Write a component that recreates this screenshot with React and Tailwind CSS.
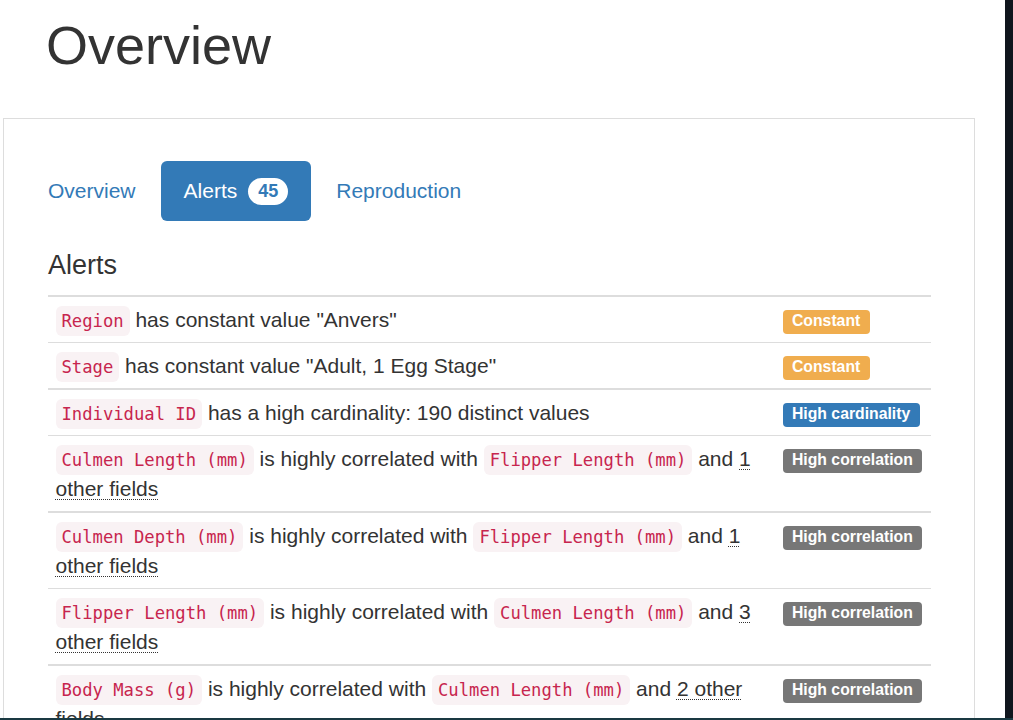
import React from 'react';

const alerts = [
  { col: 'Region', text: 'has constant value "Anvers"', type: 'Constant' },
  { col: 'Stage', text: 'has constant value "Adult, 1 Egg Stage"', type: 'Constant' },
  { col: 'Individual ID', text: 'has a high cardinality: 190 distinct values', type: 'High cardinality' },
  { col: 'Culmen Length (mm)', other: 'Flipper Length (mm)', n: 1, type: 'High correlation' },
  { col: 'Culmen Depth (mm)', other: 'Flipper Length (mm)', n: 1, type: 'High correlation' },
  { col: 'Flipper Length (mm)', other: 'Culmen Length (mm)', n: 3, type: 'High correlation' },
  { col: 'Body Mass (g)', other: 'Culmen Length (mm)', n: 2, type: 'High correlation' },
];

const labelColor = {
  Constant: 'bg-[#f0ad4e]',
  'High cardinality': 'bg-[#337ab7]',
  'High correlation': 'bg-[#777777]',
};

const Code = ({ children }) => (
  <code className="whitespace-nowrap rounded-[6px] bg-[#f9f2f4] px-[6px] py-[5px] font-['DejaVu_Sans_Mono',monospace] text-[17.2px] leading-none text-[#c7254e]">
    {children}
  </code>
);

const AlertRow = ({ alert, thick }) => (
  <div className={`flex border-[#dddddd] ${thick ? 'border-t-2' : 'border-t'}`}>
    <div className="w-[727px] shrink-0 px-[7.5px] py-[7.5px] text-[21px] leading-[30px]">
      <Code>{alert.col}</Code>{' '}
      {alert.other ? (
        <>
          is highly correlated with <Code>{alert.other}</Code> and{' '}
          <abbr className="underline decoration-dotted decoration-1 underline-offset-[3px]">{alert.n} other fields</abbr>
        </>
      ) : (
        alert.text
      )}
    </div>
    <div className="flex-1 px-[7.5px] py-[7.5px]">
      <div className="flex h-[30px] items-center pt-[5px]">
        <span
          className={`rounded-[4px] px-[9.5px] pt-[3px] pb-[5px] text-[15.75px] font-bold leading-none text-white ${labelColor[alert.type]}`}
        >
          {alert.type}
        </span>
      </div>
    </div>
  </div>
);

export default function App() {
  return (
    <div className="flex h-[720px] w-[1013px] flex-col overflow-hidden bg-white font-['Liberation_Sans',Arial,sans-serif] text-[#333333]">
      <div className="flex min-h-0 flex-1">
        <div className="min-w-0 flex-1 overflow-hidden">
          <h1 className="ml-[46px] mt-[16px] text-[54px] font-normal leading-[59px]">Overview</h1>

          <div className="ml-[3px] mt-[43px] w-[972px] border border-[#dddddd] pl-[44px] pr-[43px] pt-[42px]">
            <div className="-ml-[22.5px] flex h-[60px] gap-[3px] text-[21px] leading-[30px]">
              <div className="px-[22.5px] py-[15px] text-[#337ab7]">Overview</div>
              <div className="flex items-center rounded-[6px] bg-[#337ab7] px-[22.5px] py-[15px] text-white">
                Alerts
                <span className="ml-[11px] rounded-full bg-white px-[10px] py-[4.5px] text-[18px] font-bold leading-none text-[#337ab7]">
                  45
                </span>
              </div>
              <div className="px-[22.5px] py-[15px] text-[#337ab7]">Reproduction</div>
            </div>

            <h4 className="mt-[29px] text-[27px] font-normal leading-[30px]">Alerts</h4>

            <div className="mt-[15px]">
              {alerts.map((a, i) => (
                <AlertRow key={a.col} alert={a} thick={i % 2 === 0} />
              ))}
            </div>
          </div>
        </div>
        <div className="w-[8px] shrink-0 bg-[#10151d]" />
      </div>
      <div className="h-[2px] shrink-0 bg-[#1a3942]" />
    </div>
  );
}
